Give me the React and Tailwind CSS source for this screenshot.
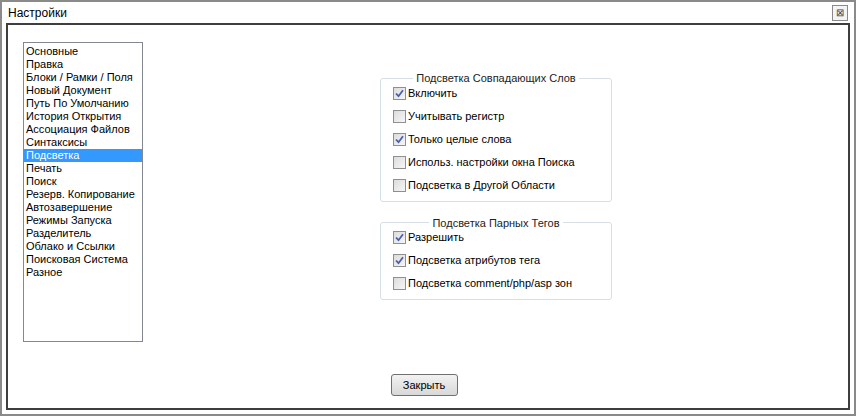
import React from 'react';

const items = [
  'Основные',
  'Правка',
  'Блоки / Рамки / Поля',
  'Новый Документ',
  'Путь По Умолчанию',
  'История Открытия',
  'Ассоциация Файлов',
  'Синтаксисы',
  'Подсветка',
  'Печать',
  'Поиск',
  'Резерв. Копирование',
  'Автозавершение',
  'Режимы Запуска',
  'Разделитель',
  'Облако и Ссылки',
  'Поисковая Система',
  'Разное',
];

function Check({ checked, label }) {
  return (
    <div className="flex h-[23px] items-center gap-[2px]">
      <span className="flex h-[13px] w-[13px] items-center justify-center border border-[#8e8f8f] bg-gradient-to-br from-[#dcdcdc] to-[#f6f6f6]">
        {checked && (
          <svg width="9" height="9" viewBox="0 0 9 9">
            <path d="M1 4.5 L3.5 7.2 L8 1.2" fill="none" stroke="#4d5ea8" strokeWidth="1.8" />
          </svg>
        )}
      </span>
      <span>{label}</span>
    </div>
  );
}

function Group({ title, children }) {
  return (
    <fieldset className="rounded-[3px] border border-[#d5dfe5] px-[12px] pb-[4px] pt-0">
      <legend className="mx-auto px-[3px] text-[#222]">{title}</legend>
      <div className="-mt-[5px]">{children}</div>
    </fieldset>
  );
}

export default function App() {
  return (
    <div
      className="flex h-[416px] w-[856px] flex-col border-2 border-[#8a8a8a] bg-white text-[11px] text-black"
      style={{ fontFamily: '"Liberation Sans", Arial, sans-serif' }}
    >
      <div className="flex h-[21px] items-center justify-between pl-[6px] pr-[6px]">
        <span className="text-[12px]">Настройки</span>
        <span className="flex h-[16px] w-[16px] items-center justify-center border border-[#8a8a8a] bg-[#f4f4f4] text-[10px] leading-none text-[#444]">
          ⊠
        </span>
      </div>
      <div className="mx-[4px] mb-[4px] flex flex-1 flex-col border-2 border-[#3e3e3e] pl-[15px] pt-[17px]">
        <div className="flex">
          <div className="h-[300px] w-[120px] border border-[#828790] pt-[2px] leading-[13px]">
            {items.map((it) => (
              <div
                key={it}
                className={
                  it === 'Подсветка'
                    ? 'bg-[#3399ff] pl-[2px] text-white'
                    : 'pl-[2px]'
                }
              >
                {it}
              </div>
            ))}
          </div>
          <div className="ml-[237px] flex w-[232px] flex-col gap-[13px] pt-[28px]">
            <Group title="Подсветка Совпадающих Слов">
              <Check checked label="Включить" />
              <Check label="Учитывать регистр" />
              <Check checked label="Только целые слова" />
              <Check label="Использ. настройки окна Поиска" />
              <Check label="Подсветка в Другой Области" />
            </Group>
            <Group title="Подсветка Парных Тегов">
              <Check checked label="Разрешить" />
              <Check checked label="Подсветка атрибутов тега" />
              <Check label="Подсветка comment/php/asp зон" />
            </Group>
          </div>
        </div>
        <div className="mt-[32px] flex justify-center pr-[23px]">
          <button className="h-[22px] w-[67px] rounded-[3px] border border-[#707070] bg-gradient-to-b from-[#f2f2f2] to-[#d8d8d8] text-[11px]">
            Закрыть
          </button>
        </div>
      </div>
    </div>
  );
}
